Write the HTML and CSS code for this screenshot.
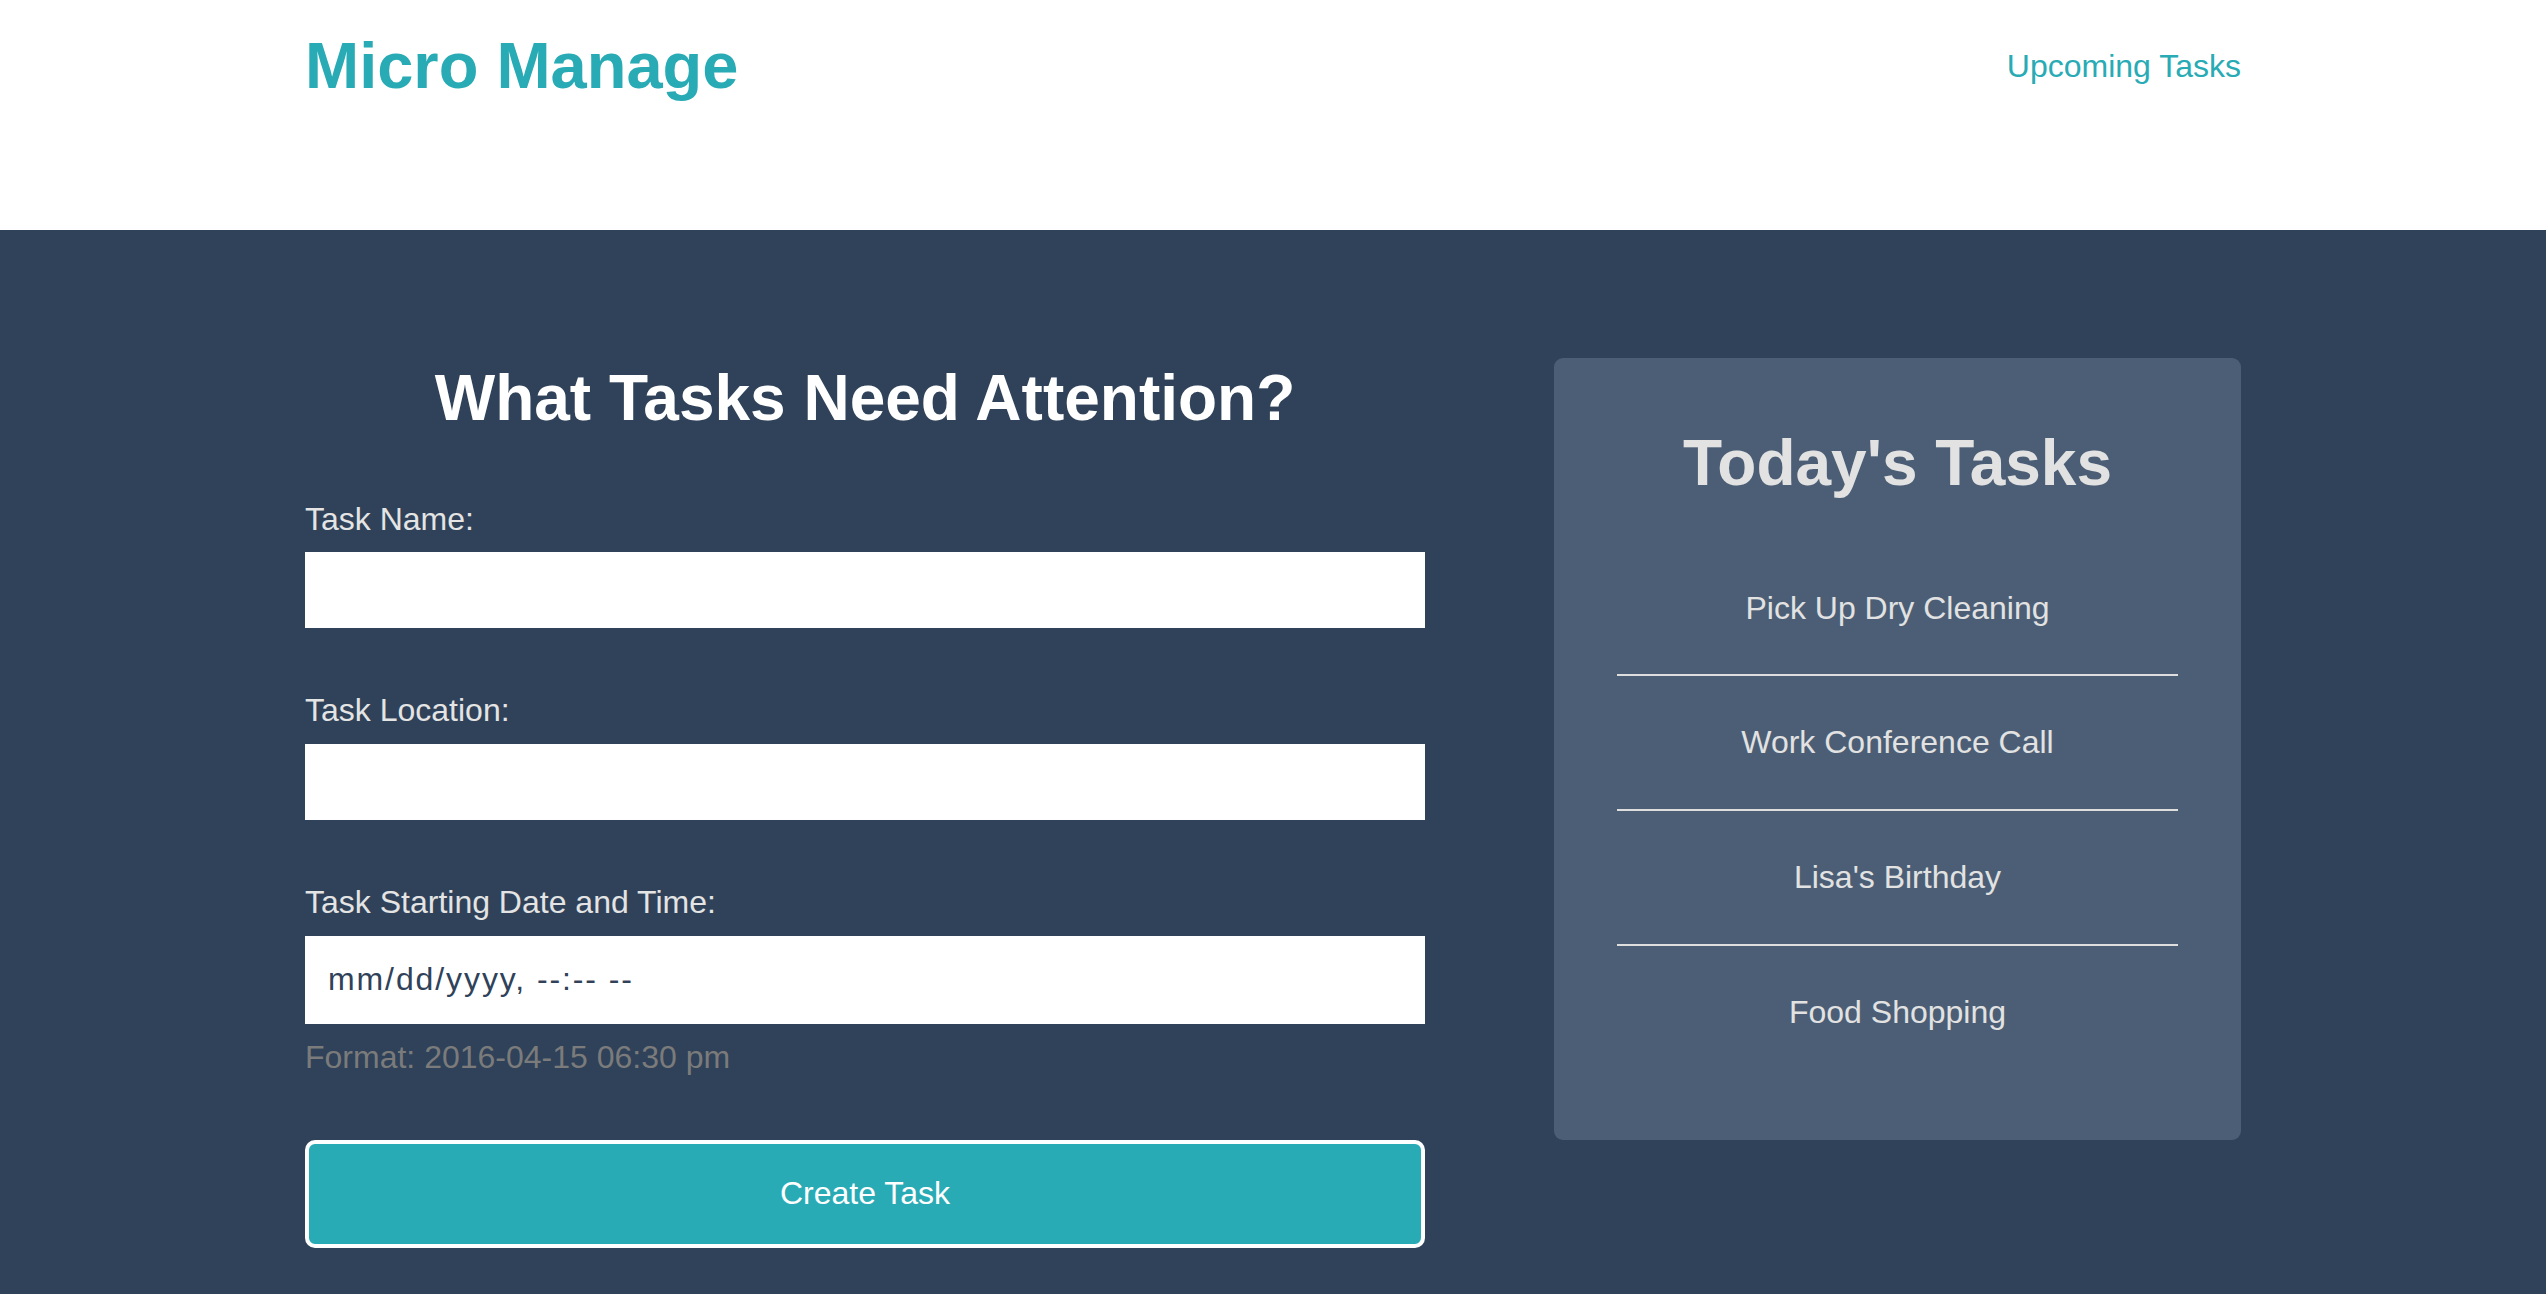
FILE: index.html
```html
<!DOCTYPE html>
<html lang="en">
<head>
<meta charset="utf-8">
<title>Micro Manage</title>
<link rel="stylesheet" href="styles.css">
</head>
<body>
<header class="site-header">
  <div class="container header-row">
    <h1 class="logo">Micro Manage</h1>
    <a class="nav-link" href="#">Upcoming Tasks</a>
  </div>
</header>
<main class="hero">
  <div class="container hero-grid">
    <section class="task-form">
      <h2 class="form-title">What Tasks Need Attention?</h2>
      <form>
        <div class="field">
          <label class="field-label" for="name">Task Name:</label>
          <input class="field-input" id="name" type="text">
        </div>
        <div class="field">
          <label class="field-label" for="loc">Task Location:</label>
          <input class="field-input" id="loc" type="text">
        </div>
        <div class="field">
          <label class="field-label" for="when">Task Starting Date and Time:</label>
          <input class="field-input date-input" id="when" type="text" placeholder="mm/dd/yyyy, --:-- --">
          <p class="hint">Format: 2016-04-15 06:30 pm</p>
        </div>
        <button class="submit-btn" type="button">Create Task</button>
      </form>
    </section>
    <aside class="today-card">
      <h2 class="card-title">Today's Tasks</h2>
      <ul class="task-list">
        <li class="task-item">Pick Up Dry Cleaning</li>
        <li class="task-item">Work Conference Call</li>
        <li class="task-item">Lisa's Birthday</li>
        <li class="task-item">Food Shopping</li>
      </ul>
    </aside>
  </div>
</main>
</body>
</html>
```
FILE: styles.css
```css
* { box-sizing: border-box; }

html, body {
  margin: 0;
  padding: 0;
}

body {
  font-family: "Liberation Sans", Arial, Helvetica, sans-serif;
  background: #2f4259;
  min-height: 100vh;
}

.container {
  width: 1936px;
  margin: 0 auto;
}

.site-header {
  background: #ffffff;
  height: 230px;
}

.header-row {
  display: flex;
  justify-content: space-between;
  align-items: center;
  padding-top: 29px;
}

.logo {
  margin: 0;
  font-size: 65px;
  line-height: 1.15;
  font-weight: 700;
  color: #28abb5;
}

.nav-link {
  font-size: 32px;
  line-height: 1.15;
  color: #28abb5;
  text-decoration: none;
}

.hero {
  background: #2f4259;
  padding-top: 128px;
  padding-bottom: 40px;
}

.hero-grid {
  display: grid;
  grid-template-columns: 1120px 687px;
  justify-content: space-between;
  align-items: start;
}

.form-title {
  margin: 4px 0 65px;
  text-align: center;
  font-size: 64px;
  line-height: 1.15;
  font-weight: 700;
  color: #ffffff;
}

.field {
  margin-bottom: 64px;
}

.field-label {
  display: block;
  font-size: 32px;
  line-height: 1.15;
  color: #e4e4e4;
  margin-bottom: 15px;
}

.field-input {
  display: block;
  width: 100%;
  height: 76px;
  border: none;
  border-radius: 0;
  background: #ffffff;
  outline: none;
  font-family: inherit;
  padding: 0 23px;
}

.date-input {
  height: 88px;
  font-size: 32px;
  letter-spacing: 1.9px;
  color: #2f4259;
}

.date-input::placeholder {
  color: #2f4259;
  opacity: 1;
}

.hint {
  margin: 15px 0 0;
  font-size: 32px;
  line-height: 1.15;
  color: #7b7b7b;
}

.submit-btn {
  display: block;
  width: 100%;
  height: 108px;
  background: #28abb5;
  border: 4px solid #ffffff;
  border-radius: 10px;
  color: #ffffff;
  font-family: inherit;
  font-size: 32px;
  cursor: pointer;
}

.today-card {
  background: #4b5e75;
  border-radius: 9px;
  padding: 69px 63px 61px;
}

.card-title {
  margin: 0 0 41px;
  text-align: center;
  font-size: 64px;
  line-height: 1.15;
  font-weight: 700;
  color: #e2e2e2;
}

.task-list {
  list-style: none;
  margin: 0;
  padding: 0;
}

.task-item {
  text-align: center;
  font-size: 32px;
  line-height: 1.15;
  color: #e2e2e2;
  padding: 48px 0;
  border-bottom: 2px solid #dedede;
}

.task-item:last-child {
  border-bottom: none;
}
```
